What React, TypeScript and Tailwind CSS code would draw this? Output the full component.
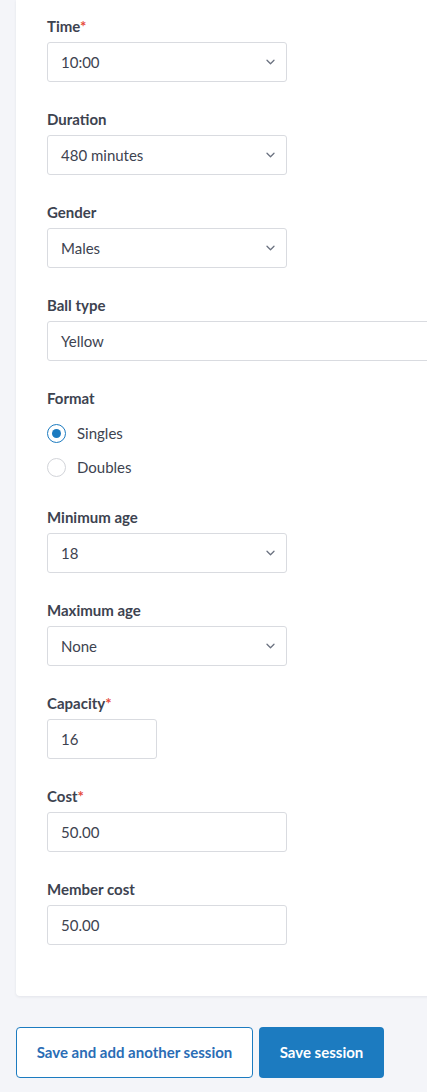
const font = { fontFamily: "Lato, 'Noto Sans', sans-serif" };

function Label({ text, required }: { text: string; required?: boolean }) {
  return (
    <p className="mb-[6px] h-5 text-[15px] font-bold leading-5 text-[#3d4350]">
      {text}
      {required ? <span className="text-[#e5493a]">*</span> : null}
    </p>
  );
}

function Chevron() {
  return (
    <svg width="9" height="6" viewBox="0 0 9 6" fill="none" className="text-[#6b7280]">
      <path d="M1 1.2l3.5 3.5 3.5-3.5" stroke="currentColor" strokeWidth="1.3" strokeLinecap="round" strokeLinejoin="round" />
    </svg>
  );
}

function SelectField({ label, value, required }: { label: string; value: string; required?: boolean }) {
  return (
    <div className="mb-[27px]">
      <Label text={label} required={required} />
      <div className="flex h-10 w-[240px] items-center justify-between rounded-[3px] border border-[#d9dbe0] bg-white pl-[13px] pr-[11px] text-[15px] text-[#3d4350]">
        <span>{value}</span>
        <Chevron />
      </div>
    </div>
  );
}

function InputField({ label, value, required, width }: { label: string; value: string; required?: boolean; width: string }) {
  return (
    <div className="mb-[27px]">
      <Label text={label} required={required} />
      <div className={`flex h-10 items-center rounded-[3px] border border-[#d9dbe0] bg-white pl-[13px] text-[15px] text-[#3d4350] ${width}`}>
        {value}
      </div>
    </div>
  );
}

function Radio({ label, checked }: { label: string; checked?: boolean }) {
  return (
    <div className="flex h-6 items-center gap-[11px]">
      <span
        className={`flex h-[19px] w-[19px] items-center justify-center rounded-full border bg-white ${
          checked ? "border-[#1c7bc0]" : "border-[#d2d4d9]"
        }`}
      >
        {checked ? <span className="h-[9px] w-[9px] rounded-full bg-[#1c7bc0]" /> : null}
      </span>
      <span className="text-[15px] text-[#3d4350]">{label}</span>
    </div>
  );
}

export default function App() {
  return (
    <div className="min-h-[1092px] w-[427px] overflow-hidden bg-[#f4f5f9]" style={font}>
      <div className="ml-4 w-[440px] rounded-bl-[4px] bg-white pb-[24px] pl-[31px] pt-4 shadow-[0_1px_3px_rgba(30,40,60,0.08)]">
        <SelectField label="Time" value="10:00" required />
        <SelectField label="Duration" value="480 minutes" />
        <SelectField label="Gender" value="Males" />
        <InputField label="Ball type" value="Yellow" width="w-[420px]" />
        <div className="mb-[28px]">
          <p className="h-5 text-[15px] font-bold leading-5 text-[#3d4350]">Format</p>
          <div className="mt-[13px] flex flex-col gap-[10px]">
            <Radio label="Singles" checked />
            <Radio label="Doubles" />
          </div>
        </div>
        <SelectField label="Minimum age" value="18" />
        <SelectField label="Maximum age" value="None" />
        <InputField label="Capacity" value="16" required width="w-[110px]" />
        <InputField label="Cost" value="50.00" required width="w-[240px]" />
        <InputField label="Member cost" value="50.00" width="w-[240px]" />
      </div>
      <div className="ml-4 mt-[31px] flex gap-[6px]">
        <button className="h-[51px] w-[237px] rounded-[4px] border border-[#1c7bc0] bg-white text-[15px] font-bold text-[#2a6db5]">
          Save and add another session
        </button>
        <button className="h-[51px] w-[125px] rounded-[4px] bg-[#1c7bc0] text-[15px] font-bold text-white">
          Save session
        </button>
      </div>
    </div>
  );
}
